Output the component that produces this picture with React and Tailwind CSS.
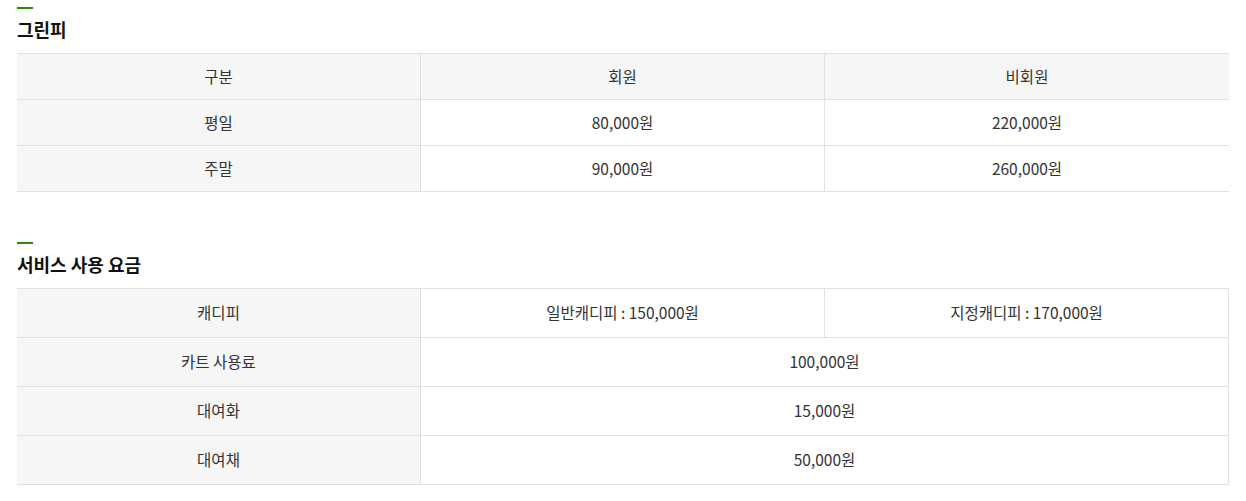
const font = { fontFamily: '"Noto Sans CJK KR", "Noto Sans", sans-serif' }

const greenFee = [
  ['평일', '80,000원', '220,000원'],
  ['주말', '90,000원', '260,000원'],
]

const services = [
  ['카트 사용료', '100,000원'],
  ['대여화', '15,000원'],
  ['대여채', '50,000원'],
]

function Title({ children }) {
  return (
    <div>
      <div className="h-[2px] w-4 bg-[#2f8a0c]" />
      <h2 className="mt-[7px] mb-[11px] text-[18px] font-bold leading-[26px] text-[#111]">{children}</h2>
    </div>
  )
}

export default function App() {
  return (
    <div className="bg-white px-[17px] pt-[7px] text-[15.5px] text-[#333]" style={font}>
      <Title>그린피</Title>
      <div className="border-t border-[#e1e1e1]">
        <div className="grid h-[46px] grid-cols-[403px_404px_1fr] border-b border-[#e1e1e1] bg-[#f6f6f6]">
          <div className="flex items-center justify-center">구분</div>
          <div className="flex items-center justify-center border-l border-[#e1e1e1]">회원</div>
          <div className="flex items-center justify-center border-l border-[#e1e1e1]">비회원</div>
        </div>
        {greenFee.map((row) => (
          <div key={row[0]} className="grid h-[46px] grid-cols-[403px_404px_1fr] border-b border-[#e1e1e1]">
            <div className="flex items-center justify-center bg-[#f6f6f6]">{row[0]}</div>
            <div className="flex items-center justify-center border-l border-[#e1e1e1]">{row[1]}</div>
            <div className="flex items-center justify-center border-l border-[#e1e1e1]">{row[2]}</div>
          </div>
        ))}
      </div>

      <div className="mt-[50px]">
        <Title>서비스 사용 요금</Title>
      </div>
      <div className="border-t border-r border-[#e1e1e1]">
        <div className="grid h-[49px] grid-cols-[403px_404px_1fr] border-b border-[#e1e1e1]">
          <div className="flex items-center justify-center bg-[#f6f6f6]">캐디피</div>
          <div className="flex items-center justify-center border-l border-[#e1e1e1]">일반캐디피 : 150,000원</div>
          <div className="flex items-center justify-center border-l border-[#e1e1e1]">지정캐디피 : 170,000원</div>
        </div>
        {services.map((row) => (
          <div key={row[0]} className="grid h-[49px] grid-cols-[403px_1fr] border-b border-[#e1e1e1]">
            <div className="flex items-center justify-center bg-[#f6f6f6]">{row[0]}</div>
            <div className="flex items-center justify-center border-l border-[#e1e1e1]">{row[1]}</div>
          </div>
        ))}
      </div>
    </div>
  )
}
